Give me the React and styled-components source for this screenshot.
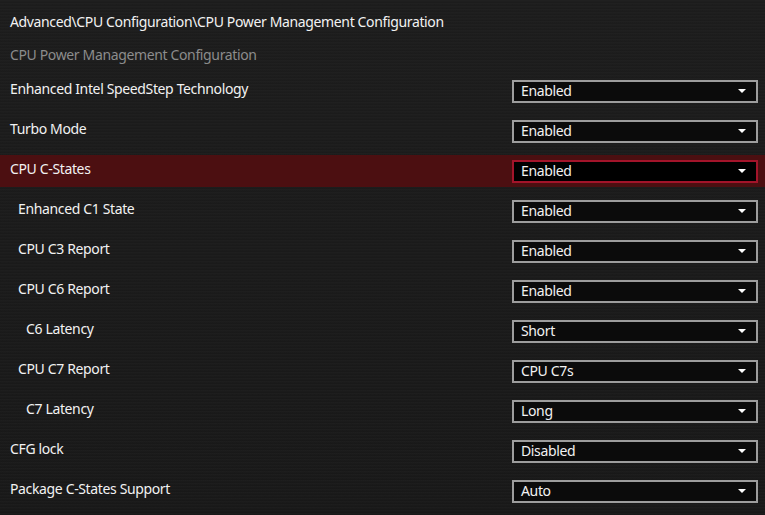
import React from 'react'
import styled, { createGlobalStyle } from 'styled-components';

const items = [
  { label: 'Enhanced Intel SpeedStep Technology', value: 'Enabled', level: 0 },
  { label: 'Turbo Mode', value: 'Enabled', level: 0 },
  { label: 'CPU C-States', value: 'Enabled', level: 0, active: true },
  { label: 'Enhanced C1 State', value: 'Enabled', level: 1 },
  { label: 'CPU C3 Report', value: 'Enabled', level: 1 },
  { label: 'CPU C6 Report', value: 'Enabled', level: 1 },
  { label: 'C6 Latency', value: 'Short', level: 2 },
  { label: 'CPU C7 Report', value: 'CPU C7s', level: 1 },
  { label: 'C7 Latency', value: 'Long', level: 2 },
  { label: 'CFG lock', value: 'Disabled', level: 0 },
  { label: 'Package C-States Support', value: 'Auto', level: 0 },
];

export default function App() {
  return (
    <>
      <GlobalStyle />
      <Screen>
        <Breadcrumb>Advanced\CPU Configuration\CPU Power Management Configuration</Breadcrumb>
        <Subtitle>CPU Power Management Configuration</Subtitle>
        <List>
          {items.map(function(item, i){
            return (
              <Row key={i} active={item.active}>
                <Label level={item.level}>{item.label}</Label>
                <Select active={item.active}>
                  <Value>{item.value}</Value>
                  <Arrow />
                </Select>
              </Row>
            );
          })}
        </List>
      </Screen>
    </>
  )
}

const GlobalStyle = createGlobalStyle`
  html, body {
    margin: 0;
    padding: 0;
    background: #1b1b1b;
  }
`;

const Screen = styled.div`
  width: 765px;
  height: 515px;
  overflow: hidden;
  font-family: "Noto Sans", "Open Sans", sans-serif;
  font-size: 14px;
  letter-spacing: -0.36px;
  color: #f2f2f2;
  background:
    repeating-linear-gradient(180deg, rgba(255,255,255,0.018) 0px, rgba(255,255,255,0.018) 1px, rgba(0,0,0,0.03) 2px, rgba(0,0,0,0) 3px),
    linear-gradient(180deg, #1c1c1c 0%, #1a1a1a 50%, #181818 100%);
`;

const Breadcrumb = styled.div`
  height: 42px;
  padding-left: 10px;
  display: flex;
  align-items: center;
`;

const Subtitle = styled.div`
  height: 26px;
  padding: 0 0 2px 10px;
  box-sizing: border-box;
  display: flex;
  align-items: center;
  color: #8c8c8c;
`;

const List = styled.div`
  padding-top: 7px;
  display: flex;
  flex-direction: column;
  gap: 8px;
`;

const Row = styled.div`
  height: 32px;
  display: flex;
  align-items: center;
  justify-content: space-between;
  padding: 0 7px 0 10px;
  background: ${p => p.active ? '#4c0f11' : 'transparent'};
`;

const Label = styled.div`
  padding-left: ${p => p.level * 8}px;
  padding-bottom: 6px;
`;

//--dropdown
const Select = styled.div`
  box-sizing: border-box;
  width: 246px;
  height: 23px;
  display: flex;
  align-items: center;
  justify-content: space-between;
  padding: 0 10px 0 7px;
  border: 2px solid ${p => p.active ? '#a3142a' : '#9d9d9d'};
  background: ${p => p.active ? '#000000' : '#0b0b0b'};
`;

const Value = styled.span`
  padding-bottom: 2px;
`;

const Arrow = styled.i`
  width: 0;
  height: 0;
  border-left: 4.5px solid transparent;
  border-right: 4.5px solid transparent;
  border-top: 4px solid #ffffff;
`;
